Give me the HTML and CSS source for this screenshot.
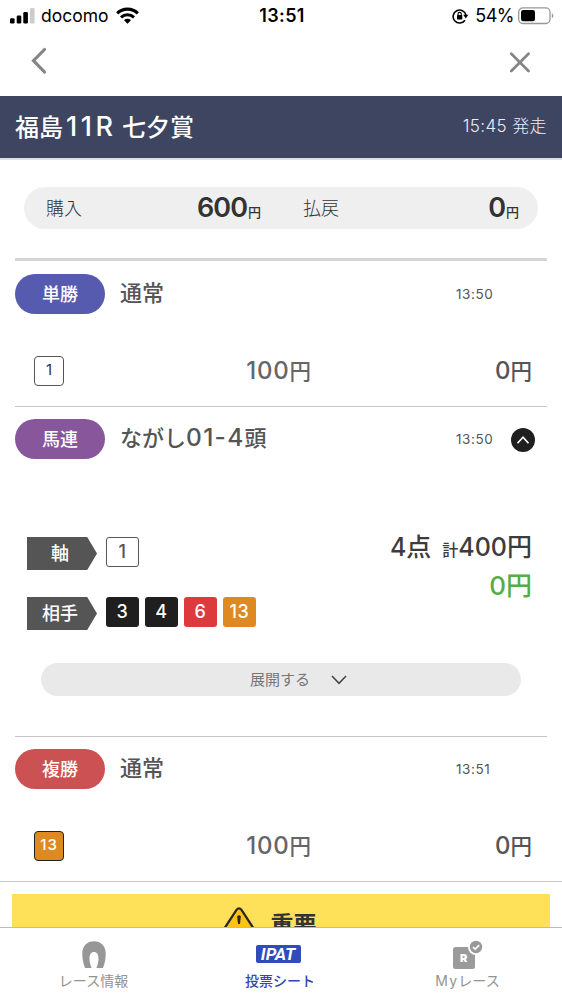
FILE: index.html
```html
<!DOCTYPE html>
<html lang="ja">
<head>
<meta charset="utf-8">
<title>投票シート</title>
<link rel="stylesheet" href="styles.css">
</head>
<body>
<div class="screen">
  <div class="status">
    <div class="status-left">
      <svg width="25" height="16" viewBox="0 0 25 16"><rect x="0" y="10.3" width="4.6" height="5.2" rx="1.3"/><rect x="6.7" y="7.6" width="4.6" height="7.9" rx="1.3"/><rect x="13.3" y="4" width="4.6" height="11.5" rx="1.3"/><rect x="20" y="0" width="4.6" height="15.5" rx="1.3" fill="#ccc"/></svg>
      <span class="carrier">docomo</span>
      <svg width="23" height="17" viewBox="0 0 23 17"><path d="M1.2 6.3a14.8 14.8 0 0 1 20.6 0" fill="none" stroke="#000" stroke-width="3.1"/><path d="M5 10.4a9.4 9.4 0 0 1 13 0" fill="none" stroke="#000" stroke-width="3"/><path d="M11.5 16.7 8 13.2a5 5 0 0 1 7 0z"/></svg>
    </div>
    <span class="clock">13:51</span>
    <div class="status-right">
      <svg width="17" height="16" viewBox="0 0 17 16"><path d="M13 12.2A6.500 6.500 0 1 1 14 7.200" fill="none" stroke="#000" stroke-width="1.600"/><path d="M11.200 6.800h5.200l-2.600 3.600z"/><rect x="5" y="7" width="5.300" height="4.600" rx=".7"/><path d="M6 7.500V6a1.650 1.650 0 0 1 3.300 0v1.500" fill="none" stroke="#000" stroke-width="1.100"/></svg>
      <span class="percent">54%</span>
      <svg width="37" height="18" viewBox="0 0 37 18"><rect x=".7" y=".9" width="31.3" height="15.6" rx="4.2" fill="#fff" stroke="#999" stroke-width="1.3"/><rect x="3" y="3.1" width="14" height="11.2" rx="2.2"/><path d="M33.8 6.1q1.6 1.1 1.6 2.6t-1.6 2.6z" fill="#999"/></svg>
    </div>
  </div>
  <div class="nav">
    <svg class="prev" width="16" height="28" viewBox="0 0 16 28"><path d="M13.5 2.500 2.500 13.700l11 11.300" fill="none" stroke="#858585" stroke-width="3.200" stroke-linecap="round"/></svg>
    <svg width="22" height="22" viewBox="0 0 22 22"><path d="M2.3 1.800l17.200 17.200M19.500 1.800 2.300 19" fill="none" stroke="#858585" stroke-width="2.700" stroke-linecap="round"/></svg>
  </div>
  <header class="race"><h1>福島<span class="rno">11R</span> 七夕賞</h1><span class="start">15:45 発走</span></header>

  <div class="summary">
    <span class="sum-label">購入</span><span class="sum-value">600<small>円</small></span>
    <span class="sum-label pay">払戻</span><span class="sum-value">0<small>円</small></span>
  </div>

  <section class="ticket first">
    <div class="head"><span class="pill win">単勝</span><h2>通常</h2><time>13:50</time></div>
    <div class="line"><span class="horse">1</span><span class="bet"><span class="num">100</span>円</span><span class="back"><span class="num">0</span>円</span></div>
  </section>

  <section class="ticket wheel">
    <div class="head"><span class="pill quinella">馬連</span><h2>ながし<span class="formula">01-4</span>頭</h2><time>13:50</time>
      <svg class="toggle" width="24" height="24" viewBox="0 0 24 24"><circle cx="12" cy="12" r="12" fill="#1f1f1f"/><path d="M6.5 15.3 12 9.2l5.5 6.1" fill="none" stroke="#fff" stroke-width="1.6"/></svg>
    </div>
    <div class="combo">
      <div class="picks">
        <div class="pick"><span class="tag">軸</span><span class="chip white">1</span></div>
        <div class="pick"><span class="tag">相手</span><span class="chip black">3</span><span class="chip black">4</span><span class="chip red">6</span><span class="chip orange">13</span></div>
      </div>
      <div class="totals">
        <div class="total">4点<small>計</small>400円</div>
        <div class="refund">0円</div>
      </div>
    </div>
    <div class="expand"><span>展開する</span><svg width="16" height="10" viewBox="0 0 16 10"><path d="M1 1l7 7.3L15 1" fill="none" stroke="#444" stroke-width="1.5"/></svg></div>
  </section>

  <section class="ticket last">
    <div class="head"><span class="pill place">複勝</span><h2>通常</h2><time>13:51</time></div>
    <div class="line"><span class="horse h13">13</span><span class="bet"><span class="num">100</span>円</span><span class="back"><span class="num">0</span>円</span></div>
  </section>

  <div class="notice-wrap">
    <div class="notice">
      <svg width="32" height="28" viewBox="0 0 32 28"><path d="M13.5 2.9q2.5-3.200 5 0L30 20.500q1 3-2 3H4q-3 0-2-3z" fill="#fbc313" stroke="#2c2820" stroke-width="2.300"/><path d="M14.1 9.200q1.900-2 3.800 0L17 17h-2z" fill="#2c2820"/></svg>
      <strong>重要</strong>
    </div>
  </div>

  <nav class="tabs">
    <div class="tab">
      <svg width="26" height="28" viewBox="0 0 26 28"><path d="M4 27C2 22 1.300 17.500 1.300 12.500 1.300 5 6.200.300 13 .300S24.700 5 24.700 12.500c0 5-.7 9.500-2.700 14.500h-6.600c1.200-3.200 2.100-6 2.100-9 0-4.700-1.500-7-4.500-7S8.500 13.300 8.500 18c0 3 .9 5.800 2.100 9z" fill="#979797"/></svg>
      <span>レース情報</span>
    </div>
    <div class="tab active"><b class="ipat">IPAT</b><span>投票シート</span></div>
    <div class="tab my">
      <svg width="32" height="30" viewBox="0 0 32 30"><rect x="1" y="7" width="22" height="22" rx="2.500" fill="#9b9b9b"/><circle cx="24" cy="7" r="8" fill="#fff"/><circle cx="24" cy="7" r="6.200" fill="#999"/><path d="M21 7.100l2.200 2 4-4" fill="none" stroke="#fff" stroke-width="1.700"/><text x="7.900" y="22.400" class="r-mark">R</text></svg>
      <span><span class="my-word">My</span>レース</span>
    </div>
  </nav>
</div>
</body>
</html>
```
FILE: styles.css
```css
* { box-sizing: border-box; }
body { margin: 0; background: #fff; color: #555; font-family: Inter, "Noto Sans CJK JP", sans-serif; }
h1, h2 { margin: 0; }
svg { display: block; flex: none; }
span, time, h1, h2, small { white-space: nowrap; }
.screen { width: 562px; height: 1000px; overflow: hidden; display: flex; flex-direction: column; }
.screen > * { flex: none; }

.status { height: 30px; display: grid; grid-template-columns: 1fr auto 1fr; align-items: center; padding: 0 7px 0 10px; color: #000; line-height: 30px; }
.status-left { display: flex; align-items: center; }
.carrier { font-size: 17.500px; margin: 0 7px 0 6px; padding-top: 1px; }
.clock { font-size: 18px; font-weight: 600; letter-spacing: .4px; padding: 1px 1px 0 0; }
.status-right { display: flex; align-items: center; justify-content: flex-end; }
.percent { font-size: 18px; margin: 0 4px 0 6px; letter-spacing: -.5px; padding-top: 1px; }

.nav { height: 66px; padding: 0 31px; display: flex; justify-content: space-between; align-items: center; }
.prev { margin-bottom: 4px; }

.race { height: 64px; border-bottom: 2px solid #dedfe3; background: #3e4561; color: #fff; display: flex; justify-content: space-between; align-items: center; padding: 0 15px 0 15px; }
.race h1 { font-size: 24px; font-weight: 500; line-height: 40px; }
.rno { font-size: 27px; letter-spacing: 3.600px; margin: 0 -1px 0 3px; }
.start { font-size: 17px; font-weight: 300; color: #eceef6; letter-spacing: .4px; line-height: 30px; padding-bottom: 2px; }

.summary { margin: 27px 24px 0; height: 42px; border-radius: 21px; background: #efefef; display: grid; grid-template-columns: 60px 155px 79px 179px; padding-left: 22px; line-height: 42px; color: #333; align-items: center; }
.sum-label { font-size: 18px; font-weight: 300; line-height: 38px; padding-bottom: 3px; }
.pay { padding-left: 42px; }
.sum-value { text-align: right; font-size: 27px; font-weight: 600; letter-spacing: -1px; }
.sum-value small { font-size: 13px; font-weight: 500; letter-spacing: 0; margin-left: 1px; }

.ticket { margin: 0 15px; border-top: 1px solid #c6c6c6; }
.first { margin-top: 29px; border-top: 3px solid #d5d5d5; height: 148px; padding-top: 13px; }
.wheel { height: 330px; padding-top: 12px; }
.last { height: 145px; padding-top: 12px; }
.head { height: 40px; display: grid; grid-template-columns: 105px 336px 55px 24px; align-items: center; }
.pill { width: 90px; height: 40px; border-radius: 20px; color: #fff; font-size: 18px; font-weight: 500; line-height: 41px; text-align: center; }
.win { background: #565bb0; }
.quinella { background: #88579b; }
.place { background: #cc5152; }
.head h2 { font-size: 22px; font-weight: 500; line-height: 36px; margin-top: -3px; }
.formula { font-size: 24.500px; letter-spacing: 1.300px; line-height: 30px; }
.head time { font-size: 13.500px; letter-spacing: .6px; }
.toggle { margin-top: 1px; }

.line { display: grid; grid-template-columns: 30px 1fr 221px; height: 30px; margin: 42px 15px 0 19px; line-height: 30px; font-size: 21.500px; font-weight: 500; text-align: right; }
.num { font-size: 24px; letter-spacing: 0; }
.horse { width: 30px; height: 30px; border: 1px solid #555; border-radius: 4px; text-align: center; font-size: 15px; line-height: 26px; font-weight: 400; color: #333; }
.h13 { background: #de8922; border-color: #222; color: #fff; font-weight: 500; letter-spacing: .9px; }
.bet { color: #666; }
.bet .num { letter-spacing: .8px; }

.combo { margin-top: 66px; height: 115px; display: flex; justify-content: space-between; padding: 12px 15px 0 12px; }
.picks { display: flex; flex-direction: column; gap: 27px; }
.pick { display: flex; gap: 6px; height: 33px; }
.tag { width: 70px; height: 33px; padding-right: 4px; margin-right: 3px; background: #555; clip-path: polygon(0 0, 86% 0, 100% 50%, 86% 100%, 0 100%); color: #fff; font-size: 18px; font-weight: 500; line-height: 34px; text-align: center; }
.chip { width: 33px; height: 30px; border-radius: 3px; color: #fff; font-size: 18px; font-weight: 500; line-height: 29px; text-align: center; letter-spacing: .6px; }
.white { border: 1px solid #555; color: #555; line-height: 28px; }
.black { background: #1f1f1f; }
.red { background: #dc3a3c; }
.orange { background: #de8922; }
.totals { margin-top: -10px; text-align: right; line-height: 41px; font-size: 25px; font-weight: 500; color: #3c3c3c; }
.total small { font-size: 16px; margin-left: 11px; }
.total { height: 38px; }
.refund { color: #55ad43; font-size: 26px; }
.expand { margin: 23px 26px 0; height: 33px; border-radius: 17px; background: #e9e9e9; display: flex; align-items: center; justify-content: center; gap: 21px; font-size: 15px; line-height: 29px; color: #777; padding-left: 35px; }
.expand span { padding-bottom: 1px; }

.notice-wrap { height: 46px; border-top: 1px solid #ccc; padding: 12px 12px 0; overflow: hidden; }
.notice { height: 60px; background: #fee159; display: flex; justify-content: center; gap: 16px; padding: 13px 23px 0 0; }
.notice strong { font-size: 23px; line-height: 32px; color: #333; padding-top: 2px; }

.tabs { height: 73px; border-top: 1px solid #bbb; background: #fff; display: grid; grid-template-columns: 187px 186px 189px; color: #939393; }
.tab { display: flex; flex-direction: column; align-items: center; font-size: 14px; line-height: 24px; padding-top: 13px; }
.active { color: #3347ae; font-weight: 500; padding-top: 17px; }
.ipat { width: 45px; height: 18px; margin: 0 4px 6px 0; background: #304bbb; color: #fff; border-radius: 2px; font: italic 700 17px/18px Roboto, sans-serif; text-align: center; }
.my { padding-top: 12px; }
.my svg { margin-bottom: -1px; }
.my-word { letter-spacing: 1.200px; }
.r-mark { font: 900 11px Inter, sans-serif; fill: #fff; }
```
